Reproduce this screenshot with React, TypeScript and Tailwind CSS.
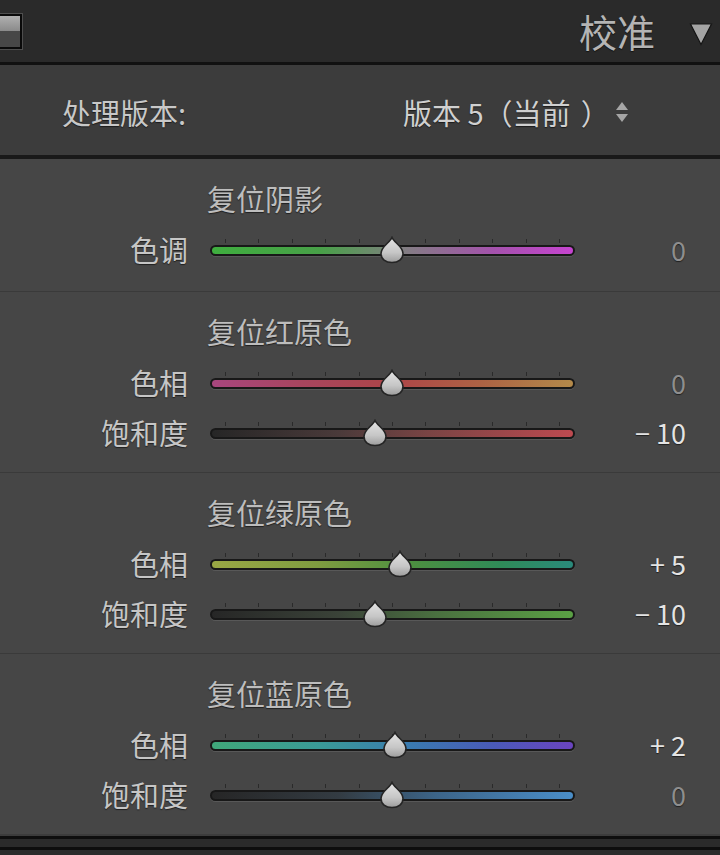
import React from "react";

type SliderDef = { label: string; value: number; grad: string };
type SectionDef = { title: string; sliders: SliderDef[]; first?: boolean };

const sections: SectionDef[] = [
  {
    title: "复位阴影",
    first: true,
    sliders: [
      {
        label: "色调",
        value: 0,
        grad: "bg-[linear-gradient(to_right,#3fae3f_0%,#48a048_30%,#738773_47%,#857b86_55%,#a452ac_78%,#c644d0_100%)]",
      },
    ],
  },
  {
    title: "复位红原色",
    sliders: [
      {
        label: "色相",
        value: 0,
        grad: "bg-[linear-gradient(to_right,#a8467e_0%,#a8455e_25%,#ad4548_50%,#ad6344_75%,#b48a4a_100%)]",
      },
      {
        label: "饱和度",
        value: -10,
        grad: "bg-[linear-gradient(to_right,#262626_0%,#4a3a3a_35%,#7a4444_60%,#bd4a50_100%)]",
      },
    ],
  },
  {
    title: "复位绿原色",
    sliders: [
      {
        label: "色相",
        value: 5,
        grad: "bg-[linear-gradient(to_right,#9aa844_0%,#7e9c40_30%,#4d9040_55%,#2f8a58_80%,#2a8a7c_100%)]",
      },
      {
        label: "饱和度",
        value: -10,
        grad: "bg-[linear-gradient(to_right,#262626_0%,#3a4238_35%,#4a7040_62%,#5aa044_100%)]",
      },
    ],
  },
  {
    title: "复位蓝原色",
    sliders: [
      {
        label: "色相",
        value: 2,
        grad: "bg-[linear-gradient(to_right,#40a87a_0%,#3a9a98_30%,#3a7ab0_55%,#4a5ab8_78%,#6a44c0_100%)]",
      },
      {
        label: "饱和度",
        value: 0,
        grad: "bg-[linear-gradient(to_right,#262626_0%,#333b42_35%,#3c6488_62%,#4a8ec8_100%)]",
      },
    ],
  },
];

const TICK_START = 15;
const TICK_SPAN = 334;

function Thumb({ value }: { value: number }) {
  const center = TICK_START + ((value + 100) / 200) * TICK_SPAN;
  return (
    <svg
      width="26"
      height="28"
      viewBox="0 0 26 28"
      className="absolute top-[3px]"
      style={{ left: `${center - 13}px` }}
    >
      <defs>
        <linearGradient id="thumbg" x1="0" y1="0" x2="0" y2="1">
          <stop offset="0" stopColor="#e4e4e4" />
          <stop offset="0.6" stopColor="#c6c6c6" />
          <stop offset="1" stopColor="#9c9c9c" />
        </linearGradient>
      </defs>
      <path
        d="M13 1.5 C15 6.5 24 10.5 24 17.5 C24 23 19.5 26.5 13 26.5 C6.5 26.5 2 23 2 17.5 C2 10.5 11 6.5 13 1.5 Z"
        fill="url(#thumbg)"
        stroke="#242424"
        strokeWidth="1.6"
      />
    </svg>
  );
}

function SliderRow({ s }: { s: SliderDef }) {
  const ticks = Array.from({ length: 11 }, (_, i) => TICK_START + (i * TICK_SPAN) / 10);
  const text =
    s.value === 0 ? "0" : s.value > 0 ? `+ ${s.value}` : `− ${Math.abs(s.value)}`;
  return (
    <div className="flex h-[50px] items-center">
      <div className="w-[188px] text-right text-[29px] leading-none text-[#c6c6c6]">{s.label}</div>
      <div className="relative ml-[22px] h-[32px] w-[365px]">
        {ticks.map((x, i) => (
          <div
            key={i}
            className="absolute top-[6px] h-[4px] w-[1px] bg-[#2a2a2a]"
            style={{ left: `${x}px` }}
          />
        ))}
        <div
          className={`mt-[12px] h-[11px] w-full rounded-full border-2 border-[#181818] shadow-[0_1px_0_rgba(255,255,255,0.1)] ${s.grad}`}
        />
        <Thumb value={s.value} />
      </div>
      <div
        className={`w-[111px] text-right text-[27px] leading-none ${
          s.value === 0 ? "text-[#8e8e8e]" : "text-[#e4e4e4]"
        }`}
      >
        {text}
      </div>
    </div>
  );
}

function Section({ sec }: { sec: SectionDef }) {
  return (
    <div
      className={`bg-[#464646] pt-[23px] ${
        sec.first ? "pb-[17px]" : "border-t border-[#3a3a3a] pb-[15px]"
      }`}
    >
      <div className="flex h-[32px] items-center pl-[207px] text-[29px] leading-none text-[#bdbdbd]">
        {sec.title}
      </div>
      <div className="mt-[10px] flex flex-col">
        {sec.sliders.map((s, i) => (
          <SliderRow key={i} s={s} />
        ))}
      </div>
    </div>
  );
}

export default function App() {
  return (
    <div className="h-[855px] w-[720px] overflow-hidden bg-[#2b2b2b] font-['Noto_Sans_CJK_SC',sans-serif] [text-shadow:0_1px_1px_rgba(0,0,0,0.55)]">
      {/* header */}
      <div className="flex h-[65px] items-center border-b-[3px] border-[#111111] bg-[#2a2a2a]">
        <div className="-ml-[3px] flex h-[37px] w-[26px] flex-col border border-[#4e4e4e]">
          <div className="flex flex-1 flex-col border-2 border-[#0a0a0a]">
            <div className="flex-1 bg-[linear-gradient(to_bottom,#b0b0b0,#8a8a8a)]" />
            <div className="flex-1 bg-[#474747]" />
          </div>
        </div>
        <div className="ml-auto text-[38px] leading-none text-[#b4b4b4]">校准</div>
        <svg width="24" height="24" viewBox="0 0 24 24" className="ml-[34px] mr-[7px] mt-[6px]">
          <path d="M1.5 2 L22.5 2 L12 22.5 Z" fill="#a4a4a4" stroke="#141414" strokeWidth="1.2" />
        </svg>
      </div>

      {/* version row */}
      <div className="flex h-[94px] items-center border-b-[4px] border-[#191919] bg-[#3c3c3c] pt-[4px]">
        <div className="w-[403px] pl-[62px] text-[29px] leading-none text-[#c8c8c8]">处理版本:</div>
        <div className="flex items-center text-[29px] leading-none text-[#d0d0d0]">
          <span>版本 5</span>
          <span>（</span>
          <span>当前</span>
          <span className="ml-[10px]">）</span>
        </div>
        <svg width="16" height="24" viewBox="0 0 16 24" className="ml-[4px]">
          <path d="M8 2 L14 10 L2 10 Z" fill="#a6a6a6" />
          <path d="M2 14 L14 14 L8 22 Z" fill="#a6a6a6" />
        </svg>
      </div>

      {sections.map((sec, i) => (
        <Section key={i} sec={sec} />
      ))}

      {/* bottom edge */}
      <div className="h-[2px] bg-[#3c3c3c]" />
      <div className="h-[3px] bg-[#0e0e0e]" />
      <div className="h-[8px] bg-[#2b2b2b]" />
      <div className="h-[3px] bg-[#0e0e0e]" />
    </div>
  );
}
